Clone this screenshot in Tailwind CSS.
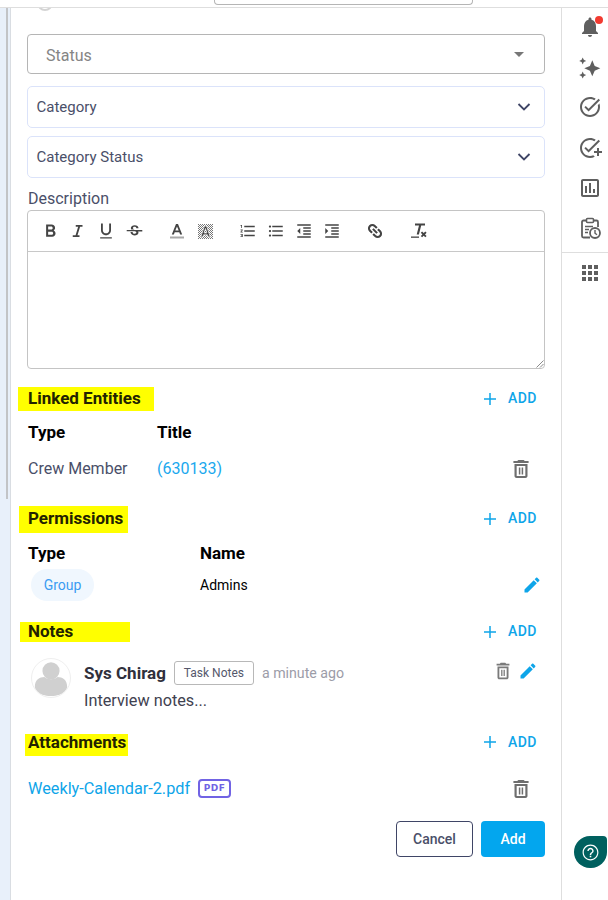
<!DOCTYPE html>
<html>
<head>
<meta charset="utf-8">
<script src="https://cdn.jsdelivr.net/npm/@tailwindcss/browser@4"></script>
</head>
<body class="bg-white">
<div class="w-[608px] h-[900px] overflow-hidden flex flex-col font-['Roboto',sans-serif]">
  <div class="h-[8px] shrink-0 border-b border-[#dedede]">
    <div class="ml-[214px] w-[259px] h-[5px] border-x border-b border-[#b5b5b5] rounded-b-[4px]"></div>
  </div>
  <div class="flex flex-1 min-h-0">
    <div class="w-[11px] shrink-0 bg-[#e8f0fa] border-r border-[#d9dde2] pl-[6px]">
      <div class="w-[2px] h-[491px] bg-[#c2c4c7]"></div>
    </div>
    <main class="flex-1 min-w-0 px-[16px]">
      <div class="ml-[10px] w-[18px] h-[3px] overflow-hidden">
        <div class="w-[16px] h-[16px] -mt-[13px] rounded-full border-2 border-[#d4d4d4]"></div>
      </div>
      <div class="mt-[23px] h-[40px] border border-[#b5b5b5] rounded-[4px] flex items-center justify-between pl-[18px] pr-[20px]">
        <span class="text-[16px] text-[#858585] pt-[3px]">Status</span>
        <span class="w-0 h-0 border-x-[5.5px] border-x-transparent border-t-[5.5px] border-t-[#777777]"></span>
      </div>
      <div class="mt-[12px] h-[42px] border border-[#dbe3fa] rounded-[5px] flex items-center justify-between pl-[8.500px] pr-[13px]">
        <span class="text-[15px] text-[#4a4f69]">Category</span>
        <svg class="w-[14px] h-[10px]" viewBox="0 0 14 10" fill="none" stroke="#3f4566" stroke-width="1.800"><path d="M1.500 2l5.500 5.500L12.500 2"/></svg>
      </div>
      <div class="mt-[8px] h-[42px] border border-[#dbe3fa] rounded-[5px] flex items-center justify-between pl-[8.500px] pr-[13px]">
        <span class="text-[15px] text-[#4a4f69]">Category Status</span>
        <svg class="w-[14px] h-[10px]" viewBox="0 0 14 10" fill="none" stroke="#3f4566" stroke-width="1.800"><path d="M1.500 2l5.500 5.500L12.500 2"/></svg>
      </div>
      <div class="mt-[10px] h-[22px] leading-[22px] text-[16px] text-[#4a4f69] pl-[1px]">Description</div>
      <div class="h-[159px] border border-[#c4c4c4] rounded-[4px] flex flex-col">
        <div class="h-[41px] shrink-0 border-b border-[#c8c8c8] flex items-center pl-[8px] text-[#444444]">
          <span class="w-[28px] flex justify-center"><svg class="w-[21px] h-[21px]" viewBox="0 0 24 24" fill="currentColor"><path d="M15.600 10.790c.97-.67 1.650-1.770 1.650-2.790 0-2.260-1.750-4-4-4H7v14h7.040c2.090 0 3.710-1.700 3.710-3.790 0-1.520-.86-2.820-2.150-3.420zM9.300 6.200h3.700c.83 0 1.500.77 1.500 1.800s-.67 1.800-1.500 1.800H9.300V6.200zm4.200 9.600H9.300v-3.600h4.200c.83 0 1.500.77 1.500 1.800s-.67 1.800-1.500 1.800z"/></svg></span>
          <span class="w-[28px] flex justify-center"><svg class="w-[18px] h-[18px]" viewBox="0 0 24 24" fill="currentColor"><path d="M9 4v2.400h3.200L8.800 17.600H5V20h9v-2.400h-2.700L14.800 6.400H18V4z"/></svg></span>
          <span class="w-[28px] flex justify-center"><svg class="w-[20px] h-[20px]" viewBox="0 0 24 24" fill="currentColor"><path d="M12 17c3.310 0 6-2.690 6-6V3h-2.200v8c0 2.100-1.700 3.800-3.800 3.800S8.200 13.100 8.200 11V3H6v8c0 3.310 2.690 6 6 6zm-7 2.500V21h14v-1.500H5z"/></svg></span>
          <span class="w-[28px] flex justify-center"><svg class="w-[17px] h-[17px]" viewBox="0 0 24 24" fill="currentColor"><path d="M6.850 7.080C6.850 4.370 9.450 3 12.240 3c1.640 0 3 .49 3.900 1.280.77.65 1.460 1.730 1.460 3.240h-3.010c0-.31-.05-.59-.15-.85-.29-.86-1.200-1.280-2.250-1.280-1.860 0-2.340 1.020-2.340 1.700 0 .48.25.88.74 1.210.38.25.77.48 1.410.7H7.390c-.21-.34-.54-.89-.54-1.920zM23 11.500V10H1v1.500h11.620c1.150.45 1.960.75 1.960 1.970 0 1-.81 1.670-2.280 1.670-1.540 0-2.930-.54-2.930-2.510H6.400c0 .55.08 1.130.24 1.580.81 2.290 3.290 3.300 5.670 3.300 2.270 0 5.300-.89 5.300-4.050 0-.3-.01-.66-.48-1.460H23z"/></svg></span>
          <span class="w-[28px] ml-[15px] flex justify-center"><svg class="w-[16px] h-[16px]" viewBox="0 0 16 16" fill="currentColor"><path d="M7 1L2.800 11.500h2.100l.8-2.200h4.600l.8 2.200h2.100L9 1H7zm-.7 6.500L8 3.400l1.700 4.100H6.300z"/><rect x="1" y="13.500" width="14" height="2" fill="#a8a8a8"/></svg></span>
          <span class="w-[28px] flex justify-center"><svg class="w-[15px] h-[15px]" viewBox="0 0 15 15"><defs><pattern id="chk" width="2" height="2" patternUnits="userSpaceOnUse"><rect width="1" height="1" fill="#777777"/><rect x="1" y="1" width="1" height="1" fill="#777777"/></pattern></defs><rect width="15" height="15" fill="url(#chk)"/><path d="M6.500 2L2.800 13h2l.7-2.200h4l.7 2.200h2L8.500 2h-2zm-.5 7L7.500 4.500 9 9H6z" fill="#333333" stroke="#ffffff" stroke-width="0.700"/></svg></span>
          <span class="w-[28px] ml-[15px] flex justify-center"><svg class="w-[18px] h-[18px]" viewBox="0 0 24 24" fill="currentColor"><path d="M2 17h2v.5H3v1h1v.5H2v1h3v-4H2v1zm1-9h1V4H2v1h1v3zm-1 3h1.800L2 13.100v.9h3v-1H3.200L5 10.900V10H2v1zm5-6v2h14V5H7zm0 14h14v-2H7v2zm0-6h14v-2H7v2z"/></svg></span>
          <span class="w-[28px] flex justify-center"><svg class="w-[18px] h-[18px]" viewBox="0 0 24 24" fill="currentColor"><path d="M4 10.500c-.83 0-1.500.67-1.500 1.500s.67 1.500 1.500 1.500 1.500-.67 1.500-1.500-.67-1.500-1.500-1.500zm0-6c-.83 0-1.500.67-1.500 1.500S3.170 7.500 4 7.500 5.500 6.830 5.500 6 4.830 4.500 4 4.500zm0 12c-.83 0-1.500.68-1.500 1.500s.68 1.500 1.500 1.500 1.500-.68 1.500-1.500-.67-1.500-1.500-1.500zM7 19h14v-2H7v2zm0-6h14v-2H7v2zm0-8v2h14V5H7z"/></svg></span>
          <span class="w-[28px] flex justify-center"><svg class="w-[18px] h-[18px]" viewBox="0 0 24 24" fill="currentColor"><path d="M11 17h10v-2H11v2zm-8-5l4 4V8l-4 4zm0 9h18v-2H3v2zM3 3v2h18V3H3zm8 6h10V7H11v2zm0 4h10v-2H11v2z"/></svg></span>
          <span class="w-[28px] flex justify-center"><svg class="w-[18px] h-[18px]" viewBox="0 0 24 24" fill="currentColor"><path d="M3 21h18v-2H3v2zM3 8v8l4-4-4-4zm8 9h10v-2H11v2zM3 3v2h18V3H3zm8 6h10V7H11v2zm0 4h10v-2H11v2z"/></svg></span>
          <span class="w-[28px] ml-[15px] flex justify-center"><svg class="w-[18px] h-[18px] rotate-45" viewBox="0 0 24 24" fill="none" stroke="currentColor" stroke-width="2.800"><path d="M11 7.500H7a4.500 4.500 0 0 0 0 9h4M13 7.500h4a4.500 4.500 0 0 1 0 9h-4M8 12h8"/></svg></span>
          <span class="w-[28px] ml-[16px] flex justify-center"><svg class="w-[18px] h-[18px]" viewBox="0 0 18 18" fill="currentColor"><path d="M5 1.500h10v2h-3.800L8.900 12.500H6.700L9 3.500H5z"/><rect x="1" y="14.500" width="8" height="1.300"/><path d="M10.800 10.800l1.300-1.300 1.600 1.600 1.600-1.600 1.300 1.300-1.600 1.600 1.600 1.600-1.300 1.300-1.600-1.600-1.600 1.600-1.300-1.300 1.600-1.600z"/></svg></span>
        </div>
        <div class="flex-1 flex items-end justify-end">
          <svg class="w-[9px] h-[9px]" viewBox="0 0 9 9" fill="none" stroke="#8a8a8a" stroke-width="1"><path d="M8.500 1.500L1.500 8.500M8.500 5L5 8.500"/></svg>
        </div>
      </div>

      <div class="mt-[18px] h-[24px] flex items-center justify-between pr-[8px]">
        <div class="-ml-[9px] w-[136px] h-full pl-[10px] bg-[#ffff00] text-[17px] font-bold text-[#222200] leading-[23px]">Linked Entities</div>
        <button class="-mt-[1px] flex items-center gap-[9px] text-[14px] tracking-[0.5px] font-medium text-[#0ea5e9]"><svg class="w-[18px] h-[18px]" viewBox="0 0 24 24" fill="currentColor"><path d="M20 13h-7v7h-2v-7H4v-2h7V4h2v7h7v2z"/></svg>ADD</button>
      </div>
      <div class="mt-[9px] h-[24px] flex items-center text-[17px] font-bold text-black pl-[1px] pt-[2px]">
        <span class="w-[129px]">Type</span><span>Title</span>
      </div>
      <div class="mt-[8px] h-[32px] flex items-center text-[16px] pl-[1px]">
        <span class="w-[129px] text-[#4a4f69] pt-[1px]">Crew Member</span><span class="text-[#1ba8ee] pt-[1px]">(630133)</span>
        <svg class="ml-auto mr-[11px] mt-[2px] w-[26px] h-[24px]" viewBox="0 0 24 24" preserveAspectRatio="none" fill="#6e6e6e"><path d="M6 19c0 1.100.9 2 2 2h8c1.100 0 2-.9 2-2V7H6v12zM8 9h8v10H8V9zm7.500-5l-1-1h-5l-1 1H5v2h14V4z"/><path d="M10 10.500h1.400v7H10zM12.600 10.500H14v7h-1.400z"/></svg>
      </div>

      <div class="mt-[22px] h-[27px] flex items-center justify-between pr-[8px]">
        <div class="-ml-[8px] w-[109px] h-full pl-[9px] bg-[#ffff00] text-[17px] font-bold text-[#222200] leading-[25px]">Permissions</div>
        <button class="-mt-[2px] flex items-center gap-[9px] text-[14px] tracking-[0.5px] font-medium text-[#0ea5e9]"><svg class="w-[18px] h-[18px]" viewBox="0 0 24 24" fill="currentColor"><path d="M20 13h-7v7h-2v-7H4v-2h7V4h2v7h7v2z"/></svg>ADD</button>
      </div>
      <div class="mt-[8px] h-[24px] flex items-center text-[17px] font-bold text-black pl-[1px] pt-[2px]">
        <span class="w-[172px]">Type</span><span>Name</span>
      </div>
      <div class="mt-[4px] h-[32px] flex items-center pl-[4px]">
        <span class="w-[63px] h-[32px] rounded-full bg-[#f0f7fe] text-[14px] text-[#3b9cf2] flex items-center justify-center">Group</span>
        <span class="ml-[106px] text-[14px] text-black">Admins</span>
        <svg class="ml-auto mr-[3px] w-[20px] h-[20px]" viewBox="0 0 24 24" fill="#0ea5e9"><path d="M3 17.250V21h3.750L17.810 9.940l-3.750-3.750L3 17.250zM20.710 7.040c.39-.39.39-1.020 0-1.410l-2.340-2.340c-.39-.39-1.020-.39-1.410 0l-1.830 1.830 3.750 3.750 1.830-1.830z"/></svg>
      </div>

      <div class="mt-[21px] h-[20px] flex items-center justify-between pr-[8px]">
        <div class="-ml-[7px] w-[110px] h-full pl-[8px] bg-[#ffff00] text-[17px] font-bold text-[#222200] leading-[18px]">Notes</div>
        <button class="-mt-[1px] flex items-center gap-[9px] text-[14px] tracking-[0.5px] font-medium text-[#0ea5e9]"><svg class="w-[18px] h-[18px]" viewBox="0 0 24 24" fill="currentColor"><path d="M20 13h-7v7h-2v-7H4v-2h7V4h2v7h7v2z"/></svg>ADD</button>
      </div>
      <div class="mt-[16px] h-[54px] flex pl-[4px]">
        <div class="w-[40px] h-[40px] shrink-0 rounded-full border border-[#efefef] overflow-hidden">
          <svg class="w-full h-full" viewBox="0 0 40 40" fill="#d0d0d0"><circle cx="20" cy="12.500" r="9"/><path d="M3 29c0-7 5-10 10-10 2 1.500 4.500 2.300 7 2.300s5-.8 7-2.300c5 0 10 3 10 10 0 3-3 10-17 10S3 32 3 29z"/></svg>
        </div>
        <div class="ml-[13px] flex-1 min-w-0">
          <div class="h-[30px] flex items-center">
            <span class="text-[17px] font-bold text-[#30303c] pt-[2px]">Sys Chirag</span>
            <span class="ml-[8px] w-[80px] h-[24px] border border-[#b8b8b8] rounded-[3px] text-[12px] text-[#55586c] flex items-center justify-center">Task Notes</span>
            <span class="ml-[8px] text-[14.200px] text-[#9c9ca8] pt-[2px]">a minute ago</span>
            <svg class="ml-auto mr-[4px] -mt-[4px] w-[22px] h-[22px]" viewBox="0 0 24 24" fill="#7a7a7a"><path d="M6 19c0 1.100.9 2 2 2h8c1.100 0 2-.9 2-2V7H6v12zM8 9h8v10H8V9zm7.500-5l-1-1h-5l-1 1H5v2h14V4z"/><path d="M10 10.500h1.400v7H10zM12.600 10.500H14v7h-1.400z"/></svg>
            <svg class="mr-[7px] -mt-[4px] w-[20px] h-[20px]" viewBox="0 0 24 24" fill="#0ea5e9"><path d="M3 17.250V21h3.750L17.810 9.940l-3.750-3.750L3 17.250zM20.710 7.040c.39-.39.39-1.020 0-1.410l-2.340-2.340c-.39-.39-1.020-.39-1.410 0l-1.830 1.830 3.750 3.750 1.830-1.830z"/></svg>
          </div>
          <div class="text-[16.250px] leading-[24px] mt-[1px] text-[#3f4250]">Interview notes...</div>
        </div>
      </div>

      <div class="mt-[22px] h-[22px] flex items-center justify-between pr-[8px]">
        <div class="-ml-[2px] w-[103px] h-full pl-[3px] bg-[#ffff00] text-[17px] font-bold text-[#222200] leading-[16px]">Attachments</div>
        <button class="-mt-[6px] flex items-center gap-[9px] text-[14px] tracking-[0.5px] font-medium text-[#0ea5e9]"><svg class="w-[18px] h-[18px]" viewBox="0 0 24 24" fill="currentColor"><path d="M20 13h-7v7h-2v-7H4v-2h7V4h2v7h7v2z"/></svg>ADD</button>
      </div>
      <div class="mt-[20px] h-[24px] flex items-center pl-[1px]">
        <span class="text-[16.250px] text-[#0ea5e9] pt-[2px]">Weekly-Calendar-2.pdf</span>
        <span class="ml-[8px] mt-[1px] w-[33px] h-[19px] border-2 border-[#7163e4] rounded-[4px] text-[9px] tracking-[0.5px] font-bold text-[#7163e4] flex items-center justify-center font-['DejaVu_Sans',sans-serif]">PDF</span>
        <svg class="ml-auto mr-[11px] mt-[1px] w-[26px] h-[24px]" viewBox="0 0 24 24" preserveAspectRatio="none" fill="#6e6e6e"><path d="M6 19c0 1.100.9 2 2 2h8c1.100 0 2-.9 2-2V7H6v12zM8 9h8v10H8V9zm7.500-5l-1-1h-5l-1 1H5v2h14V4z"/><path d="M10 10.500h1.400v7H10zM12.600 10.500H14v7h-1.400z"/></svg>
      </div>
      <div class="mt-[21px] flex justify-end gap-[8px]">
        <button class="w-[77px] h-[36px] border border-[#3f4566] rounded-[4px] text-[14px] font-medium text-[#4a4f69]">Cancel</button>
        <button class="w-[64px] h-[36px] bg-[#03a6ee] rounded-[4px] text-[14px] font-medium text-white">Add</button>
      </div>
    </main>
    <aside class="relative w-[47px] shrink-0 border-l border-[#dedede] text-[#5f5f5f]">
      <div class="h-[40px] pl-[16px] flex items-center">
        <div class="relative -mt-[2px]">
          <svg class="block w-[24px] h-[24px]" viewBox="0 0 24 24" fill="currentColor"><path d="M12 22c1.100 0 2-.9 2-2h-4c0 1.100.89 2 2 2zm6-6v-5c0-3.070-1.640-5.640-4.500-6.320V4c0-.83-.67-1.500-1.500-1.500s-1.500.67-1.500 1.500v.68C7.630 5.360 6 7.920 6 11v5l-2 2v1h16v-1l-2-2z"/></svg>
          <span class="absolute top-[1px] right-[-1px] w-[8px] h-[8px] rounded-full bg-[#f23a30]"></span>
        </div>
      </div>
      <div class="h-[40px] pl-[16px] flex items-center"><svg class="w-[24px] h-[24px]" viewBox="0 0 24 24" fill="currentColor"><path d="M14.300 4.300L16.700 9.900 22.300 12.300 16.700 14.700 14.300 20.300 11.900 14.700 6.300 12.300 11.900 9.900z"/><path d="M4.700 1.400L5.800 3.800 8.200 4.900 5.800 6 4.700 8.400 3.600 6 1.200 4.900 3.600 3.800z"/><path d="M4.700 15.600L5.800 18 8.200 19.100 5.800 20.200 4.700 22.600 3.600 20.200 1.200 19.100 3.600 18z"/></svg></div>
      <div class="h-[40px] pl-[16px] flex items-center"><svg class="w-[24px] h-[24px] -mt-[2px]" viewBox="0 0 24 24" fill="currentColor"><path d="M22 5.180L10.590 16.600l-4.240-4.240 1.410-1.410 2.830 2.830 10-10L22 5.180zm-2.210 5.040c.13.57.21 1.170.21 1.780 0 4.420-3.580 8-8 8s-8-3.580-8-8 3.580-8 8-8c1.580 0 3.040.46 4.280 1.250l1.440-1.440C16.100 2.670 14.130 2 12 2 6.480 2 2 6.480 2 12s4.480 10 10 10 10-4.480 10-10c0-1.190-.22-2.330-.6-3.390l-1.610 1.610z"/></svg></div>
      <div class="h-[40px] pl-[16px] flex items-center"><svg class="w-[24px] h-[24px]" viewBox="0 0 24 24" fill="currentColor"><path d="M22 5.180L10.590 16.600l-4.240-4.240 1.410-1.410 2.830 2.830 10-10L22 5.180zM12 20c-4.410 0-8-3.590-8-8s3.590-8 8-8c1.570 0 3.040.46 4.280 1.250l1.450-1.450C16.100 2.670 14.130 2 12 2 6.480 2 2 6.480 2 12s4.480 10 10 10c1.730 0 3.360-.44 4.780-1.220l-1.500-1.500c-1 .46-2.110.72-3.280.72zm7-5h-3v2h3v3h2v-3h3v-2h-3v-3h-2v3z"/></svg></div>
      <div class="h-[40px] pl-[16px] flex items-center"><svg class="w-[24px] h-[24px]" viewBox="0 0 24 24" fill="currentColor"><path d="M19 3H5c-1.100 0-2 .9-2 2v14c0 1.100.9 2 2 2h14c1.100 0 2-.9 2-2V5c0-1.100-.9-2-2-2zm0 16H5V5h14v14zM7 10h2v7H7zm4-3h2v10h-2zm4 6h2v4h-2z"/></svg></div>
      <div class="h-[40px] pl-[16px] flex items-center"><svg class="w-[24px] h-[24px]" viewBox="0 0 24 24" fill="none" stroke="currentColor" stroke-width="1.800"><path d="M8 4.500H5.500a1.500 1.500 0 0 0-1.500 1.500v14a1.500 1.500 0 0 0 1.500 1.500H12M16 4.500h2.500A1.500 1.500 0 0 1 20 6v5"/><rect x="8.500" y="2.500" width="7" height="4" rx="1" stroke-width="1.600"/><path d="M7 10.500h8M7 13.500h4M7 16.500h3" stroke-width="1.600"/><circle cx="17" cy="17" r="5" fill="#ffffff"/><path d="M17 14v3.200l2 1.500" stroke-width="1.400"/></svg></div>
      <div class="mt-[4px] border-t border-[#dedede] h-[40px] pl-[16px] flex items-center"><svg class="w-[24px] h-[24px]" viewBox="0 0 24 24" fill="currentColor"><path d="M4 8h4V4H4v4zm6 12h4v-4h-4v4zm-6 0h4v-4H4v4zm0-6h4v-4H4v4zm6 0h4v-4h-4v4zm6-10v4h4V4h-4zm-6 4h4V4h-4v4zm6 6h4v-4h-4v4zm0 6h4v-4h-4v4z"/></svg></div>
      <div class="absolute left-[12px] top-[828px] w-[33px] h-[32px] rounded-[16px] rounded-tr-[4px] bg-[#00605f] flex items-center justify-center">
        <svg class="w-[19px] h-[19px]" viewBox="0 0 24 24" fill="white"><path d="M11 18h2v-2h-2v2zm1-16C6.480 2 2 6.480 2 12s4.480 10 10 10 10-4.480 10-10S17.520 2 12 2zm0 18.500c-4.690 0-8.500-3.810-8.500-8.500s3.810-8.500 8.500-8.500 8.500 3.810 8.500 8.500-3.810 8.500-8.500 8.500zM12 6c-2.210 0-4 1.790-4 4h1.800c0-1.210.99-2.200 2.200-2.200s2.200.99 2.200 2.200c0 2-3.100 1.750-3.100 5h1.800c0-2.250 3.100-2.500 3.100-5 0-2.210-1.790-4-4-4z"/></svg>
      </div>
    </aside>
  </div>
</div>
</body>
</html>
